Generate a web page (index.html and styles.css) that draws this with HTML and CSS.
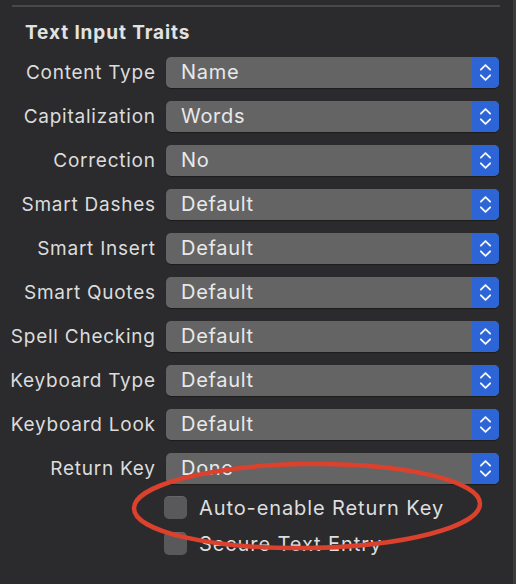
FILE: index.html
```html
<!DOCTYPE html>
<html>

<head>
  <meta charset="UTF-8">
  <meta name="viewport" content="width=device-width, initial-scale=1">
  <title>Text Input Traits</title>
  <link rel="stylesheet" href="styles.css">
</head>

<body>
  <div class="panel">
    <div class="sep"></div>
    <h3>Text Input Traits</h3>

    <div class="rows">
      <label>Content Type</label>
      <div class="popup"><span>Name</span><i class="step"><svg viewBox="0 0 14 22"><path d="M2 8 L7 3 L12 8 M2 14 L7 19 L12 14"/></svg></i></div>

      <label>Capitalization</label>
      <div class="popup"><span>Words</span><i class="step"><svg viewBox="0 0 14 22"><path d="M2 8 L7 3 L12 8 M2 14 L7 19 L12 14"/></svg></i></div>

      <label>Correction</label>
      <div class="popup"><span>No</span><i class="step"><svg viewBox="0 0 14 22"><path d="M2 8 L7 3 L12 8 M2 14 L7 19 L12 14"/></svg></i></div>

      <label>Smart Dashes</label>
      <div class="popup"><span>Default</span><i class="step"><svg viewBox="0 0 14 22"><path d="M2 8 L7 3 L12 8 M2 14 L7 19 L12 14"/></svg></i></div>

      <label>Smart Insert</label>
      <div class="popup"><span>Default</span><i class="step"><svg viewBox="0 0 14 22"><path d="M2 8 L7 3 L12 8 M2 14 L7 19 L12 14"/></svg></i></div>

      <label>Smart Quotes</label>
      <div class="popup"><span>Default</span><i class="step"><svg viewBox="0 0 14 22"><path d="M2 8 L7 3 L12 8 M2 14 L7 19 L12 14"/></svg></i></div>

      <label>Spell Checking</label>
      <div class="popup"><span>Default</span><i class="step"><svg viewBox="0 0 14 22"><path d="M2 8 L7 3 L12 8 M2 14 L7 19 L12 14"/></svg></i></div>

      <label>Keyboard Type</label>
      <div class="popup"><span>Default</span><i class="step"><svg viewBox="0 0 14 22"><path d="M2 8 L7 3 L12 8 M2 14 L7 19 L12 14"/></svg></i></div>

      <label>Keyboard Look</label>
      <div class="popup"><span>Default</span><i class="step"><svg viewBox="0 0 14 22"><path d="M2 8 L7 3 L12 8 M2 14 L7 19 L12 14"/></svg></i></div>

      <label>Return Key</label>
      <div class="popup"><span>Done</span><i class="step"><svg viewBox="0 0 14 22"><path d="M2 8 L7 3 L12 8 M2 14 L7 19 L12 14"/></svg></i></div>
    </div>

    <div class="checks">
      <div class="check"><b class="box"></b><span>Auto-enable Return Key</span></div>
      <div class="check"><b class="box"></b><span>Secure Text Entry</span></div>
    </div>

    <!-- red annotation ring drawn over the panel -->
    <svg class="ring" viewBox="0 0 516 584">
      <ellipse cx="307" cy="506" rx="173" ry="42" transform="rotate(-0.8 307 506)"/>
    </svg>
  </div>
</body>

</html>
```

FILE: styles.css
```css
*{
  box-sizing: border-box;
  margin: 0;
  padding: 0;
}

body{
  background: #2b2b2d;
  font-family: Inter, "Noto Sans", sans-serif;
  color: #dedede;
}

.panel{
  position: relative;
  width: 516px;
  height: 584px;
  border-right: 3px solid #3c3c3e;
  padding-top: 5px;
  overflow: hidden;
}

.sep{
  height: 2px;
  width: 488px;
  margin-left: 12px;
  background: #48484a;
}

.panel h3{
  font-size: 19px;
  font-weight: 700;
  color: #e2e2e2;
  padding: 14px 0 0 25px;
  height: 50px;
  letter-spacing: 0.9px;
}

.rows{
  display: grid;
  grid-template-columns: 155px 333px;
  column-gap: 11px;
  row-gap: 13px;
  align-items: center;
}

.rows label{
  text-align: right;
  font-size: 19px;
  letter-spacing: 0.75px;
  margin-right: -0.75px;
  color: #dcdcdc;
  white-space: nowrap;
}

.popup{
  display: flex;
  height: 31px;
  border-radius: 5px;
  background: #646465;
  overflow: hidden;
  box-shadow: 0 1px 1px rgba(0,0,0,.35);
}

.popup span{
  flex: 1;
  padding-left: 15px;
  font-size: 20px;
  letter-spacing: 0.7px;
  line-height: 31px;
  color: #e9e9e9;
}

.step{
  width: 27px;
  background: #2e65d6;
  display: flex;
  align-items: center;
  justify-content: center;
}

.step svg{
  width: 13px;
  height: 21px;
  fill: none;
  stroke: #f2f4fa;
  stroke-width: 2;
  stroke-linecap: round;
  stroke-linejoin: round;
}

.checks{
  display: flex;
  flex-direction: column;
  gap: 13px;
  padding: 12px 0 0 164px;
}

.check{
  display: flex;
  align-items: center;
  gap: 12px;
  height: 23px;
}

.box{
  width: 23px;
  height: 23px;
  border-radius: 5px;
  background: #59595b;
  box-shadow: inset 0 1px 0 rgba(255,255,255,.08);
}

.check span{
  font-size: 20px;
  letter-spacing: 0.9px;
  color: #dedede;
}

.ring{
  position: absolute;
  left: 0;
  top: 0;
  width: 516px;
  height: 584px;
  pointer-events: none;
}

.ring ellipse{
  fill: none;
  stroke: #dc412d;
  stroke-width: 4.5;
}
```
